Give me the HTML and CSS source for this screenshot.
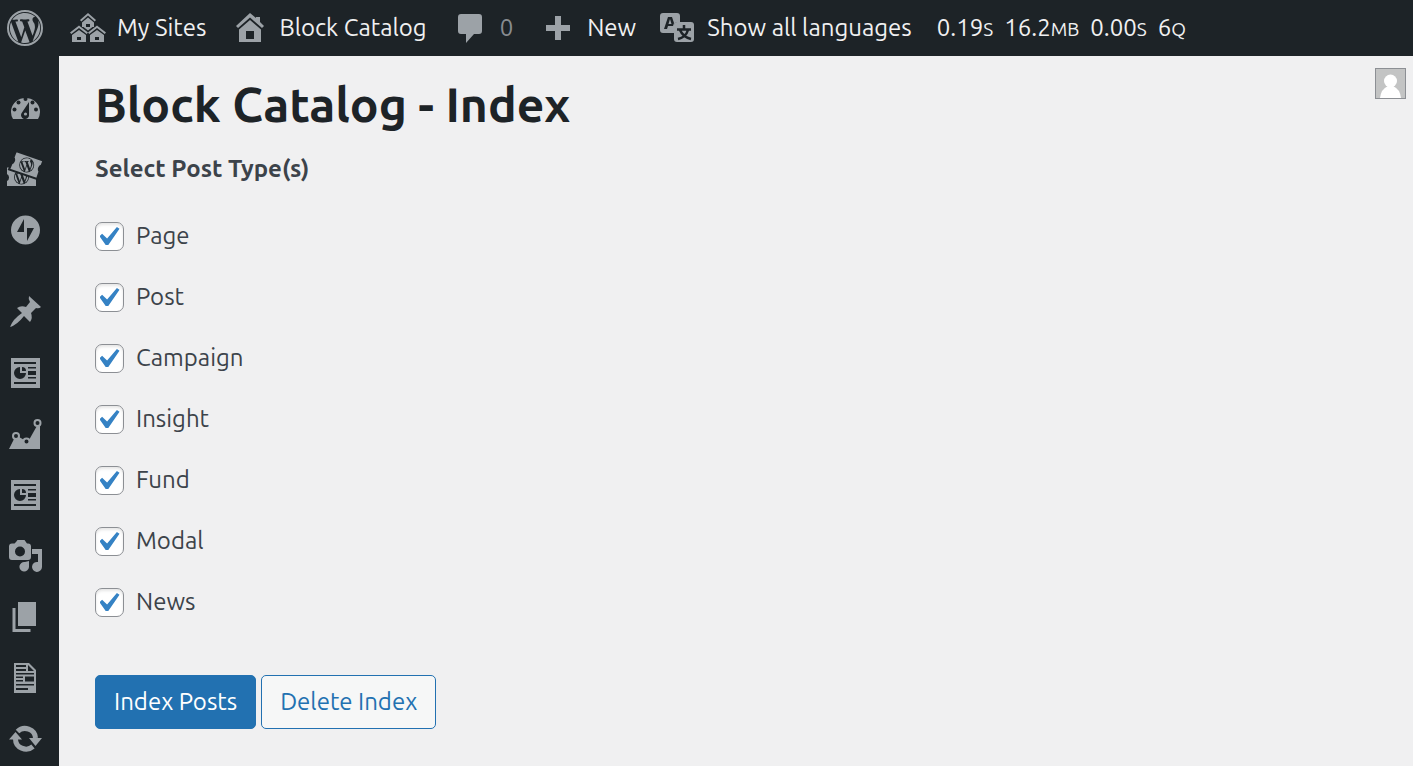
FILE: index.html
```html
<!DOCTYPE html>
<html lang="en">
<head>
<meta charset="utf-8">
<title>Block Catalog - Index</title>
<link rel="stylesheet" href="styles.css">
</head>
<body>
<svg class="defs" width="0" height="0" aria-hidden="true">
  <symbol id="w" viewBox="0 0 20 20">
    <path d="M7.78 15.37L4.37 6.22c.55-.02 1.17-.08 1.17-.08.5-.06.44-1.13-.06-1.11 0 0-1.45.11-2.37.11-.18 0-.37 0-.58-.01C4.12 2.69 6.87 1.11 10 1.11c2.33 0 4.45.87 6.05 2.34-.68-.11-1.65.39-1.65 1.58 0 .74.45 1.36.9 2.1.35.61.55 1.36.55 2.46 0 1.49-1.4 5-1.4 5l-3.03-8.37c.54-.02.82-.17.82-.17.5-.05.44-1.25-.06-1.22 0 0-1.44.12-2.38.12-.87 0-2.33-.12-2.33-.12-.5-.03-.56 1.2-.06 1.22l.92.08 1.26 3.41zM17.41 10c.24-.64.74-1.87.43-4.25.7 1.29 1.05 2.71 1.05 4.25 0 3.29-1.73 6.24-4.4 7.78.97-2.59 1.94-5.2 2.92-7.78zM6.1 18.09C3.12 16.65 1.11 13.53 1.11 10c0-1.3.23-2.48.72-3.59C3.25 10.3 4.67 14.2 6.1 18.09zm4.03-6.63l2.58 6.98c-.86.29-1.76.45-2.71.45-.79 0-1.57-.11-2.29-.33.81-2.38 1.62-4.74 2.42-7.1z"/>
  </symbol>
  <symbol id="report" viewBox="0 0 36 36">
    <path fill-rule="evenodd" d="M4 3h29v30H4zM7 7v2h22V7zM7 27v2h22v-2zM21 12v1.500h8V12zM21 16v4h8v-4zM21 22v1.500h8V22zM13 12a6 6 0 1 0 6 6h-6zM15 12v4h4a4 4 0 0 0-4-4z"/>
  </symbol>
</svg>
<div class="app">
  <header class="bar">
    <a class="logo" href="#" aria-label="About WordPress">
      <svg class="icon" viewBox="0 0 36 36"><circle cx="18" cy="18" r="17" fill="none" stroke="currentColor" stroke-width="2"/><use href="#w" x="1" y="1" width="34" height="34"/></svg>
    </a>
    <a class="item sites" href="#">
      <svg class="icon" viewBox="0 0 36 36"><path fill-rule="evenodd" d="M18 3 26 10l-1.300 1.400L18 5.600l-6.700 5.800L10 10zM18 7.500l6 5V17h-1.500L18 20.500 13.500 17H12v-4.500zM16 14v3h4v-3zM9 15.500l9 7-1.300 1.400L9 18l-7.700 5.900L0 22.500zM27 15.500l9 7-1.300 1.400L27 18l-7.700 5.900-1.300-1.400zM9 20l7 5v7H2v-7zM7 27v3h4v-3zM27 20l7 5v7H20v-7zM25 27v3h4v-3z"/></svg>
      <span>My Sites</span>
    </a>
    <a class="item home" href="#">
      <svg class="icon" viewBox="0 0 36 36"><path fill-rule="evenodd" d="M18 3l6 5V7h4v5l4 4-2 2L18 7.500 6 18l-2-2zM18 10l11 9.500V32H7V19.500zM14 21v8h8v-8z"/></svg>
      <span>Block Catalog</span>
    </a>
    <a class="item comments" href="#" aria-label="0 comments">
      <svg class="icon" viewBox="0 0 36 36"><path d="M9 4h18q3 0 3 3v14q0 3-3 3h-5l-8 9v-9H9q-3 0-3-3V7q0-3 3-3z"/></svg>
      <span class="dim">0</span>
    </a>
    <a class="item new" href="#">
      <svg class="icon" viewBox="0 0 36 36"><path d="M15 6h6v9h9v6h-9v9h-6v-9H6v-6h9z"/></svg>
      <span>New</span>
    </a>
    <a class="item langs" href="#">
      <svg class="icon" viewBox="0 0 36 36"><path fill-rule="evenodd" d="M4 3h14q3 0 3 3v6h-2q-4 0-4 4v7H4q-3 0-3-3V6q0-3 3-3zM9 7 5 19h3l1-3h5l1-3-2-6zM11 9l1.500 5H9.500z"/><path d="M18 12h14q3 0 3 3v14q0 3-3 3H18q-3 0-3-3V15q0-3 3-3z"/><path class="cut" d="M25 15v4M18 19.500h14M29 20q-2 7-10 9M21 20q3 7 11 9"/></svg>
      <span>Show all languages</span>
    </a>
    <a class="item stats" href="#"><span>0.19<small>S</small></span><span>16.2<small>MB</small></span><span>0.00<small>S</small></span><span>6<small>Q</small></span></a>
  </header>
  <nav class="menu" aria-label="Main menu">
    <a href="#" aria-label="Dashboard"><svg class="icon" viewBox="0 0 36 36"><path fill-rule="evenodd" d="M6 29A14.500 14 0 1 1 31 29zM22 12l-7 10.500a4 4 0 1 0 7 2z"/><g class="dots"><circle cx="18.500" cy="9" r="2"/><circle cx="11.500" cy="12.500" r="2"/><circle cx="25.500" cy="12.500" r="2"/><circle cx="7.500" cy="19.500" r="2"/><circle cx="29" cy="19.500" r="2"/></g><circle cx="18.500" cy="24" r="1.600"/></svg></a>
    <a href="#" aria-label="Tickets"><svg class="icon" viewBox="0 0 36 36"><path d="M0 16.500h3l26 10V35H0v-5a4 4 0 0 0 0-7z"/><circle class="disc" cx="14.500" cy="26" r="7.500"/><use href="#w" x="7" y="18.500" width="15" height="15"/><path class="ticket" d="M9 0 36.500 9.500l-2 5a4 4 0 0 0-2 6L30 28 2 18.500l2.500-6a4 4 0 0 0 2-6z"/><circle class="disc" cx="19.700" cy="14" r="7.500"/><use href="#w" x="12.200" y="6.500" width="15" height="15"/></svg></a>
    <a href="#" aria-label="Jetpack"><svg class="icon" viewBox="0 0 36 36"><path fill-rule="evenodd" d="M18.500 3.500a14.500 14.500 0 1 0 0 29 14.500 14.500 0 0 0 0-29zM17 7v13h-7zM20 16h7l-7 13z"/></svg></a>
    <a class="split" href="#" aria-label="Posts"><svg class="icon" viewBox="0 0 36 36"><path d="M22 2 34 13q-2 2-5 1l-5 5q2 5-1 9l-6-6Q10 31 3 33q3-8 12-14l-5-5q4-3 9-1l4-5q-2-3-1-6z"/></svg></a>
    <a href="#" aria-label="Campaigns"><svg class="icon"><use href="#report"/></svg></a>
    <a href="#" aria-label="Insights"><svg class="icon" viewBox="0 0 36 36"><path d="M2 33 8 21h4l7 4 3-1 9-16 2 1v24z"/><g class="node"><circle cx="9" cy="20" r="3"/><circle cx="19.500" cy="25.500" r="3"/><circle cx="30.500" cy="7" r="3"/></g></svg></a>
    <a href="#" aria-label="Funds"><svg class="icon"><use href="#report"/></svg></a>
    <a href="#" aria-label="Media"><svg class="icon" viewBox="0 0 36 36"><path fill-rule="evenodd" d="M9 4 10.500 2h7L20 5.500h1q3 0 3 3V19q0 3-3 3H5q-3 0-3-3V8.500q0-3 3-3h2.500zM13 8.500a5 5 0 1 0 0 10 5 5 0 0 0 0-10zM25 11h10v18a5 5 0 1 1-4-5v-8h-6zM22 23v6a4.800 4.800 0 1 1-4-5z"/></svg></a>
    <a href="#" aria-label="Pages"><svg class="icon" viewBox="0 0 36 36"><path d="M11 3h18v24H11zM5.500 9h3v21h15v3h-18z"/></svg></a>
    <a href="#" aria-label="Forms"><svg class="icon" viewBox="0 0 36 36"><path fill-rule="evenodd" d="M7 3h15l7 7v23H7zM9 5v2h10V5zM9 9v2h10V9zM21 5v6h6zM9 13v1.500h18V13zM9 16.500V18h7v-1.500zM18 16.500v5h9v-5zM9 20v1.500h7V20zM9 24v1.500h18V24zM9 28v2h12v-2z"/></svg></a>
    <a href="#" aria-label="Updates"><svg class="icon" viewBox="0 0 36 36"><path class="loop" d="M10.500 10.500A10.500 10 0 0 1 28.500 17M26 25.500A10.500 10 0 0 1 8.500 18"/><path d="M22 17h13l-6.500 8zM2 18.500h13L8.500 11z"/></svg></a>
  </nav>
  <main class="content">
    <div class="page">
      <h1>Block Catalog - Index</h1>
      <form>
        <fieldset>
          <legend>Select Post Type(s)</legend>
          <div class="types">
            <label><input type="checkbox" checked>Page</label>
            <label><input type="checkbox" checked>Post</label>
            <label><input type="checkbox" checked>Campaign</label>
            <label><input type="checkbox" checked>Insight</label>
            <label><input type="checkbox" checked>Fund</label>
            <label><input type="checkbox" checked>Modal</label>
            <label><input type="checkbox" checked>News</label>
          </div>
        </fieldset>
        <div class="actions">
          <button class="primary" type="button">Index Posts</button>
          <button type="button">Delete Index</button>
        </div>
      </form>
    </div>
    <svg class="avatar" viewBox="0 0 29 29" role="img" aria-label="Account"><circle cx="14.500" cy="12" r="6.500"/><path d="M4 29q1-9 8-12h5q7 3 8 12z"/></svg>
  </main>
</div>
</body>
</html>
```
FILE: styles.css
```css
* { box-sizing: border-box; }

body {
  margin: 0;
  padding: 0 14px 8px 0;
  background: #fff;
  color: #3c434a;
  font-family: Ubuntu, "Noto Sans", sans-serif;
  font-size: 24px;
  line-height: 32px;
}

.defs { position: absolute; }

.app {
  display: grid;
  grid-template: auto 1fr / 59px 1fr;
  min-height: calc(100vh - 8px);
  background: #f0f0f1;
}

.icon {
  flex: none;
  display: block;
  width: 36px;
  height: 36px;
  fill: currentColor;
}

/* Admin bar */
.bar {
  grid-column: 1 / -1;
  display: flex;
  align-items: center;
  height: 56px;
  padding-left: 7px;
  background: #1d2327;
  white-space: nowrap;
}

.bar a { color: #9ca2a7; text-decoration: none; }
.item { display: flex; align-items: center; gap: 11px; }
.item span { color: #f0f0f1; }
.item .dim { color: #888c90; }
.sites { margin-left: 27px; }
.home { margin-left: 26px; }
.comments { margin-left: 25px; gap: 12px; }
.new { margin-left: 27px; }
.langs { margin-left: 23px; gap: 12px; }
.stats { margin-left: 25px; }
small { font-size: 19px; }

.cut { fill: none; stroke: #1d2327; stroke-width: 2.500; }

/* Side menu */
.menu {
  display: flex;
  flex-direction: column;
  gap: 25px;
  padding: 34px 0 0 7px;
  background: #1d2327;
}

.menu a { color: #9ca2a7; }
.menu .split { margin-top: 21px; }
.dots, .disc { fill: #1d2327; }
.ticket { stroke: #1d2327; stroke-width: 2; }
.node { fill: #1d2327; stroke: currentColor; stroke-width: 2; }
.loop { fill: none; stroke: currentColor; stroke-width: 5; }

/* Content */
.content {
  display: flex;
  justify-content: space-between;
  align-items: flex-start;
  padding: 12px 7px 0 36px;
}

h1 {
  margin: 7px 0 20px;
  color: #1d2327;
  font-size: 48px;
  line-height: 58px;
  font-weight: 700;
}

fieldset { margin: 0; padding: 0; border: 0; }
legend { padding: 0; font-weight: 700; }
.types { display: grid; gap: 29px; padding-top: 35px; }
label { display: flex; align-items: center; gap: 12px; }

input {
  appearance: none;
  display: grid;
  place-items: center;
  width: 29px;
  height: 29px;
  margin: 0;
  border: 1px solid #8c8f94;
  border-radius: 7px;
  background: #fff;
  box-shadow: inset 0 2px 3px rgba(0, 0, 0, .1);
}

input:checked::before {
  content: "";
  width: 20px;
  height: 18px;
  background: #3582c4;
  clip-path: polygon(87% 0, 100% 10%, 44% 100%, 31% 100%, 0 51%, 13% 38%, 38% 64%);
}

.actions { display: flex; gap: 5px; padding-top: 57px; }

button {
  height: 54px;
  padding: 0 18px;
  border: 1px solid #2271b1;
  border-radius: 5px;
  background: #f6f7f7;
  color: #2271b1;
  font: inherit;
}

.primary { background: #2271b1; color: #fff; }

.avatar {
  width: 31px;
  height: 31px;
  border: 1px solid #8c8f94;
  background: #c3c4c4;
  fill: #fff;
}
```
